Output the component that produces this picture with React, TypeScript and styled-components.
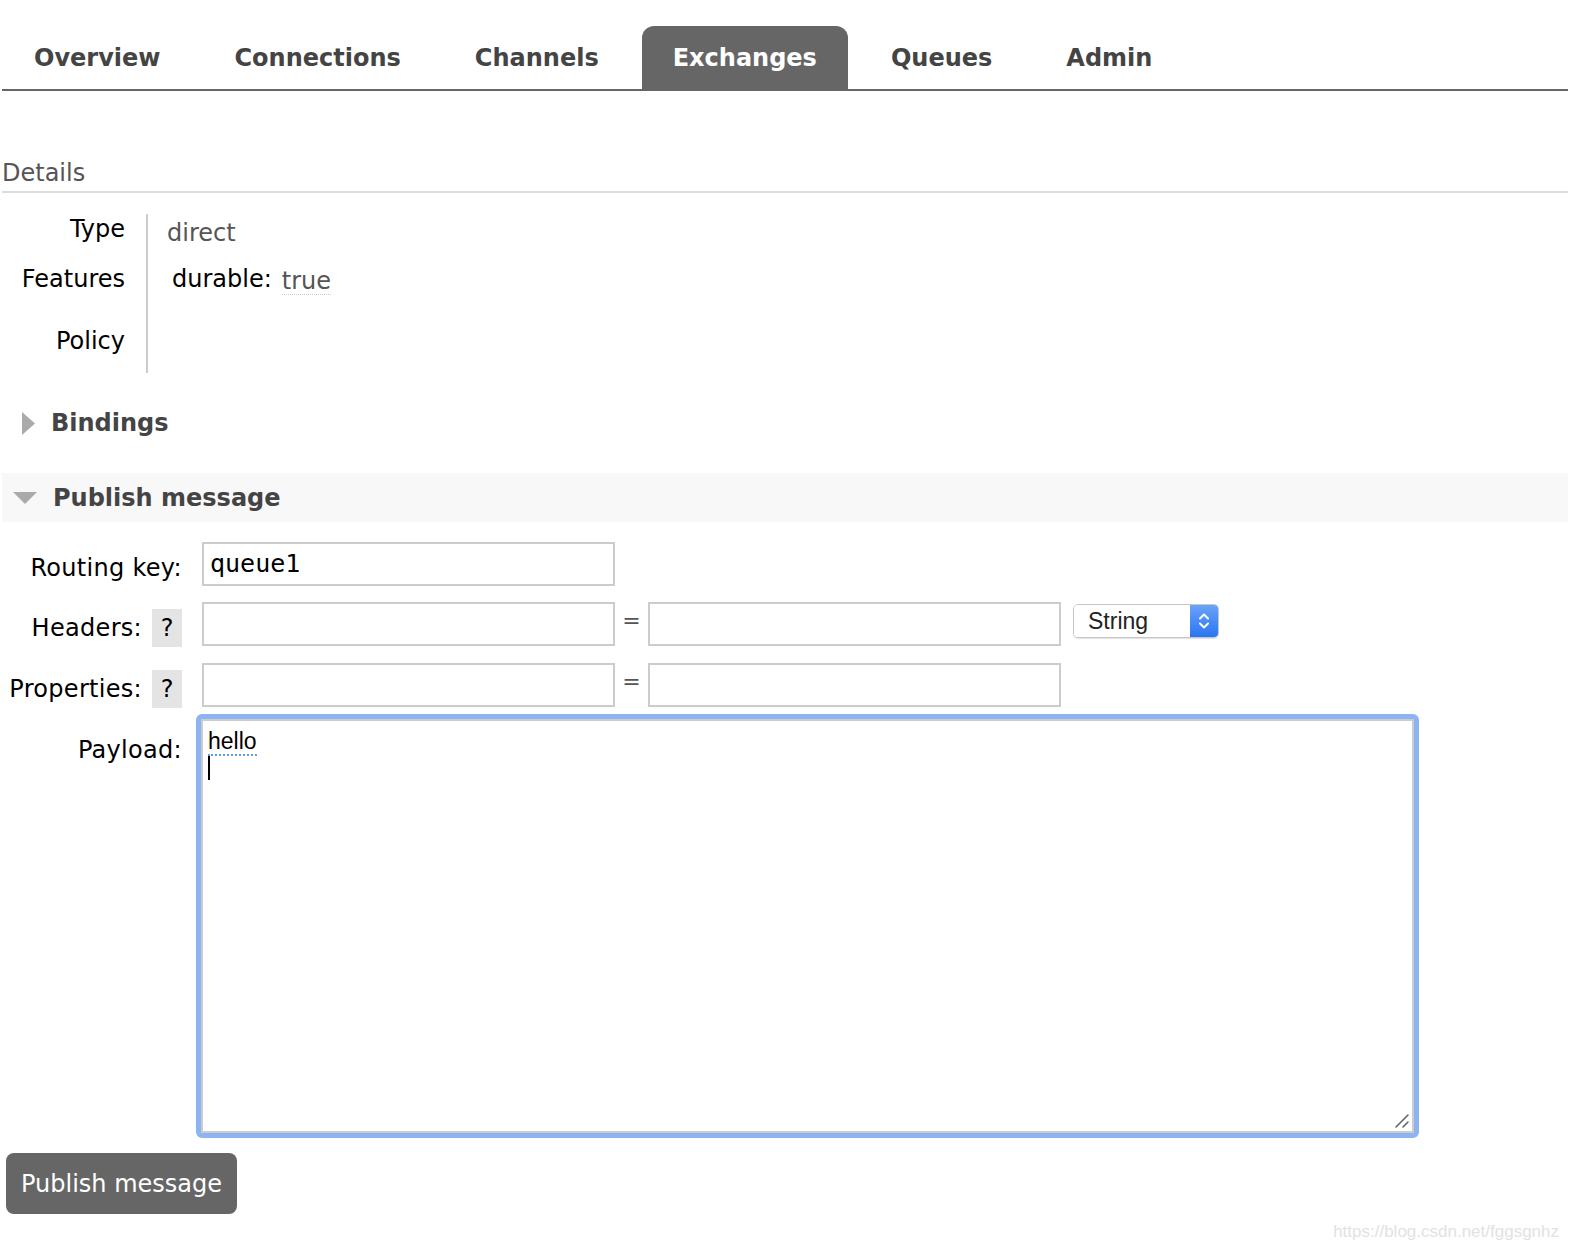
import React from "react";
import styled, { createGlobalStyle } from "styled-components";

const GlobalStyle = createGlobalStyle`
  html, body {
    margin: 0;
    padding: 0;
    background: #ffffff;
  }
  body {
    font-family: "DejaVu Sans", Verdana, sans-serif;
    color: #000;
  }
`;

const Page = styled.div`
  position: relative;
  display: flow-root;
  height: 1252px;
  padding: 26px 2px 0;
  box-sizing: border-box;
  overflow: hidden;
  font-size: 24px;
`;

/* ---------- top navigation ---------- */

const TabBar = styled.nav`
  display: flex;
  gap: 12px;
  padding-left: 1px;
  border-bottom: 2px solid #666;
`;

const Tab = styled.a<{ $active?: boolean }>`
  display: flex;
  align-items: center;
  height: 63px;
  padding: 0 31px;
  border-radius: 12px 12px 0 0;
  font-weight: bold;
  font-size: 24px;
  text-decoration: none;
  color: ${(p) => (p.$active ? "#fff" : "#444")};
  background: ${(p) => (p.$active ? "#666" : "transparent")};
`;

/* ---------- details ---------- */

const SectionTitle = styled.h2`
  margin: 67px 0 0;
  padding-bottom: 3px;
  font-size: 24px;
  font-weight: normal;
  line-height: 30px;
  color: #555;
  border-bottom: 2px solid #ddd;
`;

const DetailsGrid = styled.div`
  display: grid;
  grid-template-columns: 144px 1fr;
  margin-top: 21px;
`;

const DetailLabel = styled.div<{ $h: number }>`
  height: ${(p) => p.$h}px;
  padding-right: 21px;
  text-align: right;
  line-height: 30px;
  color: #000;
`;

const DetailValue = styled.div<{ $h: number }>`
  height: ${(p) => p.$h}px;
  border-left: 2px solid #ccc;
  padding-left: 19px;
  line-height: 30px;
  color: #555;
`;

const Direct = styled.span`
  display: inline-block;
  padding-top: 4px;
`;

const Feature = styled.span`
  display: inline-flex;
  align-items: flex-start;
  gap: 10px;
  padding-left: 5px;
  color: #000;
`;

const FeatureValue = styled.span`
  margin-top: 4px;
  line-height: 26px;
  color: #555;
  border-bottom: 1px dotted #ccc;
`;

/* ---------- collapsible sections ---------- */

const Collapsible = styled.div<{ $open?: boolean }>`
  display: flex;
  align-items: center;
  gap: 16px;
  height: ${(p) => (p.$open ? "49px" : "30px")};
  margin-top: 35px;
  padding-left: ${(p) => (p.$open ? "11px" : "20px")};
  background: ${(p) => (p.$open ? "#f8f8f8" : "transparent")};
  font-weight: bold;
  font-size: 24px;
  color: #444;
`;

const Arrow = styled.svg`
  flex: none;
  display: block;
`;

/* ---------- publish form ---------- */

const Form = styled.form`
  display: flex;
  flex-direction: column;
  margin-top: 20px;
`;

const FormRow = styled.div<{ $gap: number }>`
  display: grid;
  grid-template-columns: 180px 1fr;
  column-gap: 20px;
  margin-top: ${(p) => p.$gap}px;
`;

const LabelCell = styled.label<{ $top?: boolean }>`
  display: flex;
  box-sizing: border-box;
  height: ${(p) => (p.$top ? "auto" : "44px")};
  justify-content: flex-end;
  align-items: ${(p) => (p.$top ? "flex-start" : "center")};
  gap: 10px;
  padding-top: ${(p) => (p.$top ? "22px" : "7px")};
  font-size: 24px;
  letter-spacing: 0.3px;
  color: #000;
`;

const Help = styled.span`
  flex: none;
  display: flex;
  align-items: center;
  justify-content: center;
  width: 30px;
  height: 38px;
  background: #e4e4e4;
  font-size: 24px;
  letter-spacing: 0;
`;

const Fields = styled.div`
  display: flex;
  align-items: flex-start;
`;

const TextInput = styled.div`
  box-sizing: border-box;
  width: 413px;
  height: 44px;
  border: 2px solid #ccc;
  padding: 0 6px 2px;
  display: flex;
  align-items: center;
  font-family: "DejaVu Sans Mono", Menlo, monospace;
  font-size: 25px;
  color: #000;
`;

const Equals = styled.span`
  width: 33px;
  text-align: center;
  line-height: 38px;
  font-size: 22px;
  color: #555;
`;

const Select = styled.div`
  display: flex;
  box-sizing: border-box;
  width: 146px;
  height: 34px;
  margin: 2px 0 0 12px;
  border: 1px solid #c6c6c6;
  border-radius: 5px;
  overflow: hidden;
  box-shadow: 0 1px 1px rgba(0, 0, 0, 0.12);
  font-family: "Liberation Sans", Arial, sans-serif;
  font-size: 23px;
`;

const SelectText = styled.span`
  flex: 1;
  display: flex;
  align-items: center;
  padding-left: 14px;
  color: #222;
  background: #fff;
`;

const SelectArrows = styled.span`
  width: 28px;
  display: flex;
  align-items: center;
  justify-content: center;
  background: linear-gradient(#6aa3f8, #2a75f3);
`;

const FocusRing = styled.div`
  box-sizing: border-box;
  width: 1223px;
  margin-left: -6px;
  border: 5px solid #8db4f2;
  border-radius: 6px;
`;

const Editor = styled.div`
  position: relative;
  box-sizing: border-box;
  height: 414px;
  border: 2px solid #ccc;
  padding: 8px 5px;
  font-family: "Liberation Sans", Arial, sans-serif;
  font-size: 23px;
  line-height: 25px;
  color: #000;
`;

const Misspelled = styled.span`
  border-bottom: 2px dotted #5d9cf2;
`;

const Caret = styled.span`
  display: block;
  width: 2px;
  height: 24px;
  margin-top: 2px;
  background: #000;
`;

const Grip = styled.svg`
  position: absolute;
  right: 2px;
  bottom: 2px;
`;

const SubmitButton = styled.button`
  align-self: flex-start;
  margin-top: 15px;
  margin-left: 4px;
  height: 61px;
  padding: 0 15px;
  border: none;
  border-radius: 8px;
  background: #666;
  color: #fff;
  font-family: "DejaVu Sans", Verdana, sans-serif;
  font-size: 24px;
`;

const Watermark = styled.span`
  position: absolute;
  right: 11px;
  bottom: 10px;
  font-family: "Liberation Sans", Arial, sans-serif;
  font-size: 17px;
  color: #e2e2e2;
`;

const tabs = ["Overview", "Connections", "Channels", "Exchanges", "Queues", "Admin"];

export default function App() {
  return (
    <>
      <GlobalStyle />
      <Page>
        <TabBar>
          {tabs.map((t) => (
            <Tab key={t} $active={t === "Exchanges"}>
              {t}
            </Tab>
          ))}
        </TabBar>

        <SectionTitle>Details</SectionTitle>
        <DetailsGrid>
          <DetailLabel $h={50}>Type</DetailLabel>
          <DetailValue $h={50}>
            <Direct>direct</Direct>
          </DetailValue>
          <DetailLabel $h={62}>Features</DetailLabel>
          <DetailValue $h={62}>
            <Feature>
              durable:
              <FeatureValue>true</FeatureValue>
            </Feature>
          </DetailValue>
          <DetailLabel $h={47}>Policy</DetailLabel>
          <DetailValue $h={47} />
        </DetailsGrid>

        <Collapsible>
          <Arrow width="13" height="23" viewBox="0 0 13 23">
            <polygon points="0,0 13,11.5 0,23" fill="#aaa" />
          </Arrow>
          Bindings
        </Collapsible>

        <Collapsible $open>
          <Arrow width="24" height="12" viewBox="0 0 24 12">
            <polygon points="0,0 24,0 12,12" fill="#aaa" />
          </Arrow>
          Publish message
        </Collapsible>

        <Form onSubmit={(e) => e.preventDefault()}>
          <FormRow $gap={0}>
            <LabelCell>Routing key:</LabelCell>
            <Fields>
              <TextInput>queue1</TextInput>
            </Fields>
          </FormRow>

          <FormRow $gap={16}>
            <LabelCell>
              Headers: <Help>?</Help>
            </LabelCell>
            <Fields>
              <TextInput />
              <Equals>=</Equals>
              <TextInput />
              <Select>
                <SelectText>String</SelectText>
                <SelectArrows>
                  <svg width="12" height="20" viewBox="0 0 12 20">
                    <path
                      d="M2 7.5 L6 3.5 L10 7.5 M2 12.5 L6 16.5 L10 12.5"
                      stroke="#fff"
                      strokeWidth="2"
                      fill="none"
                      strokeLinecap="round"
                      strokeLinejoin="round"
                    />
                  </svg>
                </SelectArrows>
              </Select>
            </Fields>
          </FormRow>

          <FormRow $gap={17}>
            <LabelCell>
              Properties: <Help>?</Help>
            </LabelCell>
            <Fields>
              <TextInput />
              <Equals>=</Equals>
              <TextInput />
            </Fields>
          </FormRow>

          <FormRow $gap={7}>
            <LabelCell $top>Payload:</LabelCell>
            <FocusRing>
              <Editor>
                <Misspelled>hello</Misspelled>
                <Caret />
                <Grip width="16" height="16" viewBox="0 0 16 16">
                  <path
                    d="M2 14 L14 2 M9 14 L14 9"
                    stroke="#666"
                    strokeWidth="1.6"
                    strokeLinecap="round"
                  />
                </Grip>
              </Editor>
            </FocusRing>
          </FormRow>

          <SubmitButton type="submit">Publish message</SubmitButton>
        </Form>

        <Watermark>https://blog.csdn.net/fggsgnhz</Watermark>
      </Page>
    </>
  );
}
